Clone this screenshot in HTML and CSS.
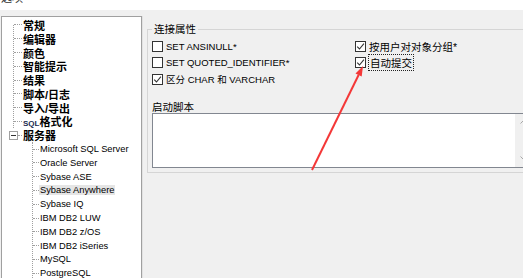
FILE: index.html
```html
<!DOCTYPE html>
<html lang="zh-CN">
<head>
  <meta charset="UTF-8" />
  <title>选项</title>
  <link rel="stylesheet" href="styles.css">
</head>
<body>

  <div class="titlebar"><span>选项</span></div>

  <div class="main">
    <div class="tree">
      <div class="branch root">
        <div class="node"><i class="stub"></i><span>常规</span></div>
        <div class="node"><i class="stub"></i><span>编辑器</span></div>
        <div class="node"><i class="stub"></i><span>颜色</span></div>
        <div class="node"><i class="stub"></i><span>智能提示</span></div>
        <div class="node"><i class="stub"></i><span>结果</span></div>
        <div class="node"><i class="stub"></i><span>脚本/日志</span></div>
        <div class="node"><i class="stub"></i><span>导入/导出</span></div>
        <div class="node"><i class="stub"></i><span><b class="lat">SQL</b>格式化</span></div>
      </div>
      <div class="node parent"><i class="toggle"></i><i class="stub"></i><span>服务器</span></div>
      <div class="branch servers">
        <div class="node"><i class="stub"></i><span>Microsoft SQL Server</span></div>
        <div class="node"><i class="stub"></i><span>Oracle Server</span></div>
        <div class="node"><i class="stub"></i><span>Sybase ASE</span></div>
        <div class="node sel"><i class="stub"></i><span>Sybase Anywhere</span></div>
        <div class="node"><i class="stub"></i><span>Sybase IQ</span></div>
        <div class="node"><i class="stub"></i><span>IBM DB2 LUW</span></div>
        <div class="node"><i class="stub"></i><span>IBM DB2 z/OS</span></div>
        <div class="node"><i class="stub"></i><span>IBM DB2 iSeries</span></div>
        <div class="node"><i class="stub"></i><span>MySQL</span></div>
        <div class="node"><i class="stub"></i><span>PostgreSQL</span></div>
      </div>
    </div>

    <div class="options">
      <fieldset class="group">
        <legend>连接属性</legend>
        <div class="checks">
          <label class="check"><i class="box"></i><span>SET ANSINULL*</span></label>
          <label class="check cjk"><i class="box"><svg viewBox="0 0 9 9"><path d="M1.2 4.6 L3.5 7 L7.9 1.6"/></svg></i><span>按用户对对象分组*</span></label>
          <label class="check"><i class="box"></i><span>SET QUOTED_IDENTIFIER*</span></label>
          <label class="check cjk"><i class="box"><svg viewBox="0 0 9 9"><path d="M1.2 4.6 L3.5 7 L7.9 1.6"/></svg></i><span class="focus">自动提交</span></label>
          <label class="check"><i class="box"><svg viewBox="0 0 9 9"><path d="M1.2 4.6 L3.5 7 L7.9 1.6"/></svg></i><span>区分 CHAR 和 VARCHAR</span></label>
        </div>

        <div class="script-label">启动脚本</div>
        <div class="script-box">
          <div class="script-area"></div>
          <div class="scroll">
            <svg viewBox="0 0 7 4"><path d="M0.5 3.5 L3.5 0.5 L6.5 3.5"/></svg>
            <svg viewBox="0 0 7 4"><path d="M0.5 0.5 L3.5 3.5 L6.5 0.5"/></svg>
          </div>
        </div>
      </fieldset>
    </div>
  </div>

  <svg class="arrow" viewBox="0 0 523 278">
    <line x1="312" y1="170" x2="358.6" y2="75" />
    <polygon points="363,66 361.7,76.5 355.5,73.5" />
  </svg>

</body>
</html>
```

FILE: styles.css
```css
body {
  margin: 0;
  width: 523px;
  height: 278px;
  overflow: hidden;
  position: relative;
  background: #f0f0f0;
  color: #000;
  font-family: "Liberation Sans", "Noto Sans CJK SC", sans-serif;
}

.titlebar {
  height: 10px;
  background: #fff;
  overflow: hidden;
}

.titlebar span {
  display: block;
  margin-top: -8px;
  padding-left: 1px;
  font-size: 11px;
  line-height: 12px;
  color: #333;
}

.main {
  display: flex;
  padding-top: 6px;
  height: 262px;
}

/* tree */
.tree {
  flex: none;
  width: 139px;
  margin-left: 1px;
  padding-top: 1px;
  background: #fff;
  border: 1px solid #a0a0a0;
  border-bottom: 0;
  box-shadow: 1px 0 0 #e2e2e2;
  overflow: hidden;
}

.branch {
  display: flex;
  flex-direction: column;
  border-left: 1px dotted #a0a0a0;
}

.node {
  display: flex;
  align-items: center;
  height: 13.8px;
  white-space: nowrap;
}

.stub {
  flex: none;
  width: 8px;
  border-top: 1px dotted #a0a0a0;
}

.node span {
  margin-left: 1px;
}

.root {
  margin-left: 11px;
  margin-top: 7px;
}

.root .node:first-child {
  margin-top: -7px;
}

.root .node,
.parent {
  font-size: 11px;
  font-weight: 700;
}

.lat {
  font-size: 8px;
  color: #1a2a50;
}

.parent {
  margin-left: 7px;
}

.parent .stub {
  width: 4px;
}

.toggle {
  flex: none;
  width: 9px;
  height: 9px;
  box-sizing: border-box;
  border: 1px solid #a0a0a0;
  background: linear-gradient(#333, #333) center / 5px 1px no-repeat, #fff;
}

.servers {
  margin-left: 30px;
}

.servers .stub {
  width: 6px;
}

.servers .node {
  font-size: 9.3px;
}

.sel span {
  margin-left: 0;
  padding: 0 1px;
  background: #e5e5e5;
}

/* options */
.options {
  flex: none;
  margin-left: 5px;
}

.group {
  width: 390px;
  min-width: 0;
  box-sizing: border-box;
  margin: 6px 0 0;
  padding: 2px 4px 4px;
  border: 1px solid #d5d5d5;
}

.group legend {
  padding: 0 2px;
  font-size: 10.5px;
  line-height: 14px;
}

.checks {
  display: grid;
  grid-template-columns: 203px auto;
  grid-auto-rows: 16.5px;
  align-items: center;
}

.check {
  display: flex;
  align-items: center;
  gap: 3px;
  font-size: 9.5px;
  white-space: nowrap;
}

.check.cjk {
  font-size: 10.5px;
}

.box {
  flex: none;
  display: flex;
  width: 11px;
  height: 11px;
  box-sizing: border-box;
  border: 1px solid #333;
  background: #fff;
}

.box svg {
  width: 9px;
  height: 9px;
  fill: none;
  stroke: #333;
  stroke-width: 1.1;
}

.focus {
  outline: 1px dotted #222;
  outline-offset: 0;
  padding: 0 1px;
}

.script-label {
  margin-top: 13.5px;
  font-size: 10.5px;
  line-height: 12px;
}

.script-box {
  display: flex;
  height: 55px;
  box-sizing: border-box;
  border: 1px solid #828790;
  background: #fff;
}

.script-area {
  flex: 1;
}

.scroll {
  flex: none;
  width: 16px;
  padding: 6px 0 7px;
  background: #f0f0f0;
  display: flex;
  flex-direction: column;
  justify-content: space-between;
  align-items: center;
}

.scroll svg {
  width: 7px;
  height: 4px;
  fill: none;
  stroke: #a8a8a8;
  stroke-width: 1;
}

.arrow {
  position: absolute;
  left: 0;
  top: 0;
  width: 523px;
  height: 278px;
  pointer-events: none;
}

.arrow line {
  stroke: #f43838;
  stroke-width: 2;
}

.arrow polygon {
  fill: #f43838;
}
```
